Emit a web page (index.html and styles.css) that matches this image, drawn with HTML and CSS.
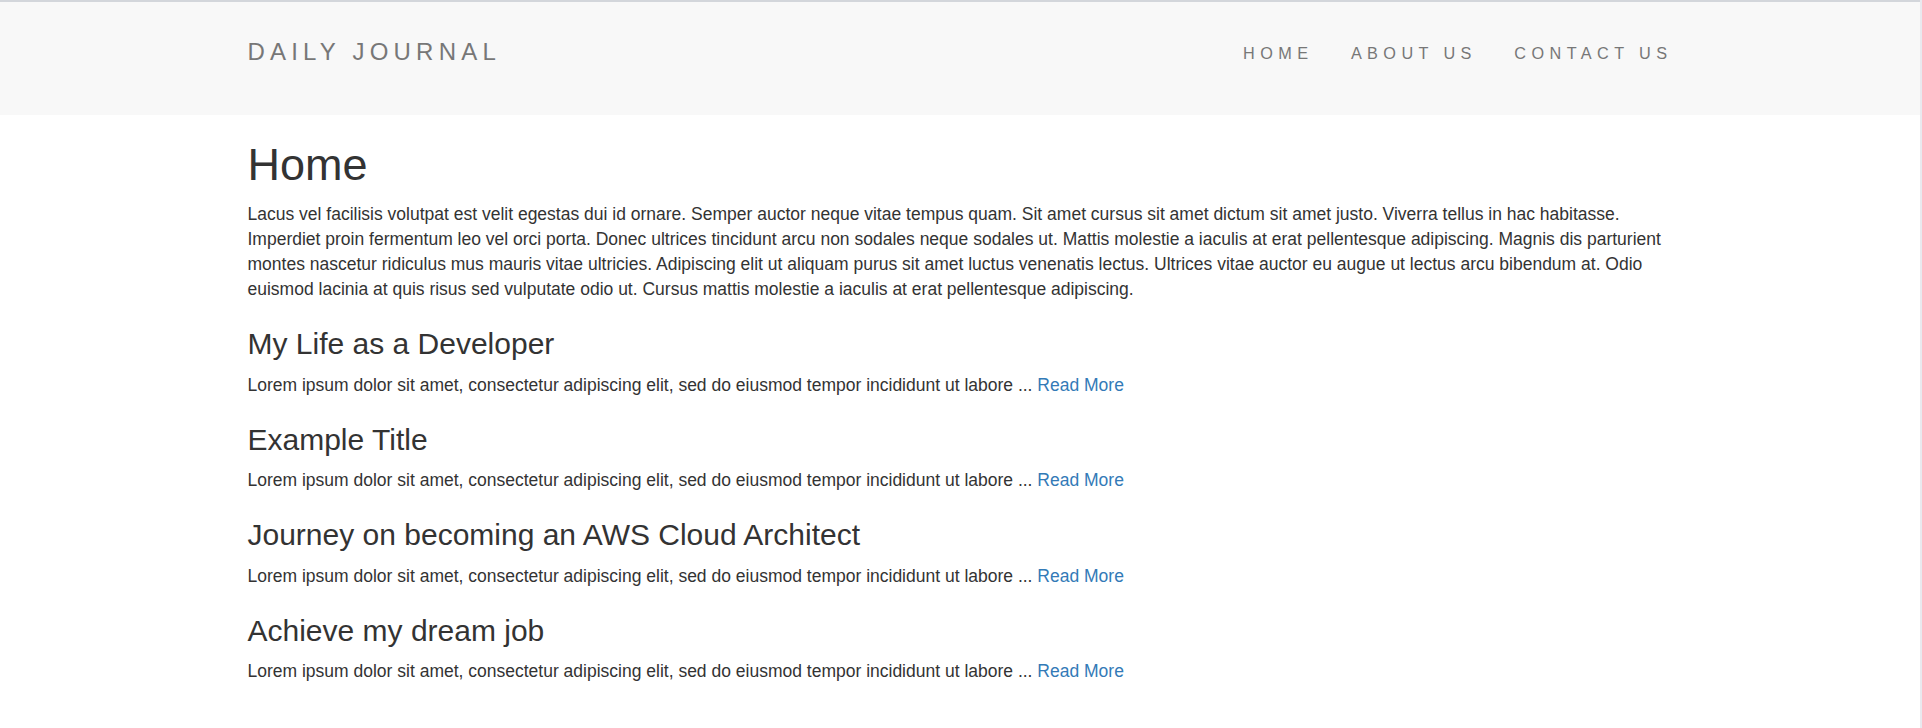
FILE: index.html
```html
<!DOCTYPE html>
<html lang="en">
<head>
<meta charset="utf-8">
<title>Daily Journal</title>
<link rel="stylesheet" href="styles.css">
</head>
<body>
<nav class="navbar">
  <div class="container navbar-inner">
    <a class="brand" href="#">DAILY JOURNAL</a>
    <ul class="nav">
      <li><a href="#">HOME</a></li>
      <li><a href="#">ABOUT US</a></li>
      <li><a href="#">CONTACT US</a></li>
    </ul>
  </div>
</nav>
<main class="container content">
  <h1>Home</h1>
  <p>Lacus vel facilisis volutpat est velit egestas dui id ornare. Semper auctor neque vitae tempus quam. Sit amet cursus sit amet dictum sit amet justo. Viverra tellus in hac habitasse. Imperdiet proin fermentum leo vel orci porta. Donec ultrices tincidunt arcu non sodales neque sodales ut. Mattis molestie a iaculis at erat pellentesque adipiscing. Magnis dis parturient montes nascetur ridiculus mus mauris vitae ultricies. Adipiscing elit ut aliquam purus sit amet luctus venenatis lectus. Ultrices vitae auctor eu augue ut lectus arcu bibendum at. Odio euismod lacinia at quis risus sed vulputate odio ut. Cursus mattis molestie a iaculis at erat pellentesque adipiscing.</p>

  <h3>My Life as a Developer</h3>
  <p>Lorem ipsum dolor sit amet, consectetur adipiscing elit, sed do eiusmod tempor incididunt ut labore ... <a href="#">Read More</a></p>

  <h3>Example Title</h3>
  <p>Lorem ipsum dolor sit amet, consectetur adipiscing elit, sed do eiusmod tempor incididunt ut labore ... <a href="#">Read More</a></p>

  <h3>Journey on becoming an AWS Cloud Architect</h3>
  <p>Lorem ipsum dolor sit amet, consectetur adipiscing elit, sed do eiusmod tempor incididunt ut labore ... <a href="#">Read More</a></p>

  <h3>Achieve my dream job</h3>
  <p>Lorem ipsum dolor sit amet, consectetur adipiscing elit, sed do eiusmod tempor incididunt ut labore ... <a href="#">Read More</a></p>
</main>
</body>
</html>
```
FILE: styles.css
```css
html {
  background: #e9e9ef;
}
body {
  margin: 0 2px 0 0;
  min-height: 726px;
  background: #fff;
  border-top: 2px solid #d3d6db;
  font-family: "Liberation Sans", Arial, Helvetica, sans-serif;
  font-size: 17.5px;
  line-height: 25px;
  color: #333;
}
a {
  text-decoration: none;
}
.container {
  width: 1425px;
  margin: 0 auto;
}
.navbar {
  background: #f8f8f8;
  height: 113px;
}
.navbar-inner {
  display: flex;
  justify-content: space-between;
  align-items: flex-start;
}
.brand {
  padding-top: 37.7px;
  font-size: 24px;
  line-height: 24px;
  letter-spacing: 5.2px;
  color: #777;
}
.nav {
  display: flex;
  list-style: none;
  margin: 0 -18.75px 0 0;
  padding: 40.7px 0 0;
}
.nav a {
  display: block;
  padding: 0 18.75px;
  font-size: 16.25px;
  line-height: 20px;
  letter-spacing: 5.4px;
  color: #777;
}
.content h1 {
  margin: 25px 0 12.5px;
  font-size: 45px;
  font-weight: 500;
  line-height: 1.1;
}
.content h3 {
  margin: 25px 0 12.5px;
  font-size: 30px;
  font-weight: 500;
  line-height: 1.1;
}
.content p {
  margin: 0 0 12.5px;
}
.content a {
  color: #337ab7;
}
```
